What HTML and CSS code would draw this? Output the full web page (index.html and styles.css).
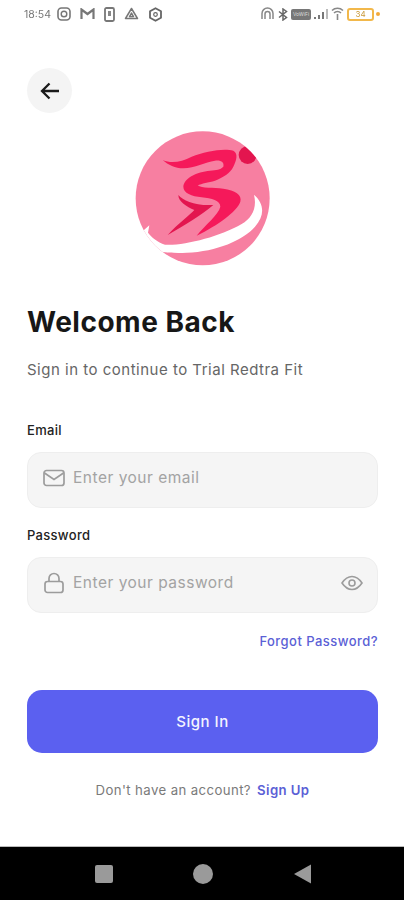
FILE: index.html
```html
<!DOCTYPE html>
<html lang="en">
<head>
  <meta charset="UTF-8">
  <meta name="viewport" content="width=device-width, initial-scale=1.0">
  <title>Sign In</title>
  <link rel="stylesheet" href="styles.css">
</head>
<body>
  <div class="status-bar">
    <div class="status-left">
      <span class="time">18:54</span>
      <svg class="st" width="14" height="14" viewBox="0 0 14 14"><rect x="1" y="1" width="12" height="12" rx="3.500" fill="none" stroke="#777" stroke-width="1.600"/><circle cx="7" cy="7" r="2.800" fill="none" stroke="#777" stroke-width="1.400"/></svg>
      <svg class="st" width="15" height="12" viewBox="0 0 15 12"><path d="M1.500 11V1.500L7.500 6l6-4.500V11" fill="none" stroke="#777" stroke-width="2.200"/></svg>
      <svg class="st" width="11" height="15" viewBox="0 0 11 15"><rect x="1" y="1" width="9" height="13" rx="1.500" fill="none" stroke="#777" stroke-width="1.800"/><rect x="4" y="4" width="3" height="5" fill="#888"/></svg>
      <svg class="st" width="15" height="14" viewBox="0 0 15 14"><path d="M7.500 1.500L13.500 11.500H1.500Z M7.500 6L5.500 9.500H9.500Z" fill="none" stroke="#777" stroke-width="1.500" stroke-linejoin="round"/></svg>
      <svg class="st" width="15" height="15" viewBox="0 0 15 15"><path d="M7.500 1.200L13 4.300V10.700L7.500 13.800L2 10.700V4.300Z" fill="none" stroke="#666" stroke-width="1.800" stroke-linejoin="round"/><circle cx="7.500" cy="7.500" r="1.800" fill="none" stroke="#666" stroke-width="1.200"/></svg>
    </div>
    <div class="status-right">
      <svg class="st" width="15" height="14" viewBox="0 0 15 14"><path d="M2 12V6.500a5.500 5.500 0 0 1 11 0V12M5 12V7a2.500 2.500 0 0 1 5 0v5" fill="none" stroke="#888" stroke-width="1.500"/></svg>
      <svg class="st" width="10" height="13" viewBox="0 0 10 13"><path d="M1 3.500L8.500 9.500L5 12V1L8.500 3.500L1 9.500" fill="none" stroke="#666" stroke-width="1.500"/></svg>
      <span class="volte">VoWiFi</span>
      <svg class="st" width="14" height="12" viewBox="0 0 14 12"><rect x="0" y="9" width="2" height="2" fill="#777"/><rect x="4" y="7" width="2" height="4" fill="#777"/><rect x="8" y="4" width="2" height="7" fill="#777"/><rect x="12" y="1" width="2" height="10" fill="#bbb"/></svg>
      <svg class="st" width="13" height="14" viewBox="0 0 13 14"><path d="M1 3.500a8 8 0 0 1 11 0M3 6a5 5 0 0 1 7 0M6.500 7v6" fill="none" stroke="#888" stroke-width="1.600"/></svg>
      <span class="battery">34</span>
      <span class="charge-dot"></span>
    </div>
  </div>

  <main class="screen">
    <button class="back-btn" aria-label="Back">
      <svg width="22" height="22" viewBox="0 0 22 22"><path d="M20 11H3.500M10.500 3.500L3 11l7.500 7.500" fill="none" stroke="#1a1a1a" stroke-width="2.300"/></svg>
    </button>

    <div class="logo-wrap">
      <svg class="logo" width="165" height="155" viewBox="0 0 495 465">
        <defs><clipPath id="disc"><circle cx="248" cy="235" r="201"/></clipPath></defs>
        <g clip-path="url(#disc)">
          <rect width="495" height="465" fill="#f77fa1"/>
          <circle cx="383" cy="105" r="27" fill="#e3154f"/>
          <path d="M402 224C432 250 436 285 405 320C370 360 290 395 200 398C170 400 145 398 125 396L30 380L40 325L72 330L88 316L84 338C95 352 112 366 135 374C190 378 300 350 365 312C395 295 412 265 402 224Z" fill="#fff"/>
        </g>
        <g transform="translate(105 60)">
          <path d="M23 60C50 72 80 65 110 50C150 34 205 24 235 32C250 40 245 60 235 80C225 100 205 112 180 122C160 128 140 130 128 136C140 146 175 142 205 146C240 150 262 165 256 185C245 215 190 255 125 287C150 255 190 225 196 200C196 182 170 175 140 172C110 168 85 160 85 140C87 115 125 95 165 92C185 90 195 90 205 80C208 68 200 60 180 62C150 66 120 84 85 85C60 85 40 75 23 60Z" fill="#f5195a"/>
          <path d="M70 165C85 182 120 198 175 195C140 225 90 255 38 285C70 250 105 225 118 210C95 200 70 185 70 165Z" fill="#e3154f"/>
        </g>
      </svg>
    </div>

    <h1 class="title">Welcome Back</h1>
    <p class="subtitle">Sign in to continue to Trial Redtra Fit</p>

    <form class="form">
      <label class="field-label">Email</label>
      <div class="field">
        <svg width="22" height="18" viewBox="0 0 22 18"><rect x="1" y="1.500" width="20" height="15" rx="2.500" fill="none" stroke="#9c9c9c" stroke-width="1.700"/><path d="M1.500 4L11 10.500L20.500 4" fill="none" stroke="#9c9c9c" stroke-width="1.700"/></svg>
        <span class="placeholder">Enter your email</span>
      </div>

      <label class="field-label pw-label">Password</label>
      <div class="field">
        <svg width="22" height="22" viewBox="0 0 22 22"><rect x="2" y="9.500" width="18" height="11" rx="2.500" fill="none" stroke="#9c9c9c" stroke-width="1.700"/><path d="M6 9.500V6.500a5 5 0 0 1 10 0v3" fill="none" stroke="#9c9c9c" stroke-width="1.700"/></svg>
        <span class="placeholder">Enter your password</span>
        <svg class="eye" width="22" height="16" viewBox="0 0 22 16"><path d="M1 8C4 3.500 7.500 1.500 11 1.500S18 3.500 21 8C18 12.500 14.500 14.500 11 14.500S4 12.500 1 8Z" fill="none" stroke="#9c9c9c" stroke-width="1.600"/><circle cx="11" cy="8" r="3" fill="none" stroke="#9c9c9c" stroke-width="1.600"/></svg>
      </div>

      <a class="forgot">Forgot Password?</a>
      <button class="sign-in" type="button">Sign In</button>
    </form>

    <p class="signup">Don't have an account? <a>Sign Up</a></p>
  </main>

  <nav class="nav-bar">
    <span class="nav-square"></span>
    <span class="nav-circle"></span>
    <svg width="18" height="20" viewBox="0 0 18 20"><path d="M1 10L18 0.500V19.500Z" fill="#9a9a9a"/></svg>
  </nav>
</body>
</html>
```

FILE: styles.css
```css
* {
  box-sizing: border-box;
}
body {
  margin: 0;
  height: 900px;
  display: flex;
  flex-direction: column;
  font-family: Inter, "Noto Sans", sans-serif;
  background: #fff;
  color: #1a1a1a;
  overflow: hidden;
}
.status-bar {
  height: 30px;
  padding: 0 24px 2px 24px;
  display: flex;
  justify-content: space-between;
  align-items: center;
  filter: blur(0.4px);
}
.status-left, .status-right {
  display: flex;
  align-items: center;
}
.status-left {
  gap: 9px;
}
.status-right {
  gap: 3px;
}
.st {
  display: block;
}
.time {
  width: 29px;
  font-size: 10.500px;
  color: #777;
  margin-right: -5px;
}
.volte {
  width: 20px;
  height: 11px;
  background: #777;
  color: #ddd;
  font-size: 5px;
  line-height: 11px;
  text-align: center;
  border-radius: 2px;
}
.battery {
  width: 27px;
  height: 13px;
  border: 2px solid #f2b84b;
  border-radius: 3px;
  font-size: 8px;
  line-height: 9px;
  text-align: center;
  color: #c99a3c;
}
.charge-dot {
  width: 4px;
  height: 4px;
  border-radius: 50%;
  background: #f2a93b;
  margin-left: -1px;
}
.screen {
  flex: 1;
  padding: 38px 26px 0 27px;
}
.back-btn {
  width: 45px;
  height: 45px;
  border: none;
  border-radius: 50%;
  background: #f4f4f4;
  padding: 0;
  display: flex;
  align-items: center;
  justify-content: center;
}
.logo-wrap {
  display: flex;
  justify-content: center;
  margin-top: 7px;
}
.logo {
  display: block;
}
.title {
  margin: 29px 0 0;
  font-size: 28px;
  line-height: 36px;
  font-weight: 700;
  letter-spacing: 0.500px;
  color: #171717;
}
.subtitle {
  margin: 20px 0 0;
  font-size: 15px;
  line-height: 20px;
  letter-spacing: 0.500px;
  color: #666;
}
.form {
  margin-top: 41px;
  display: flex;
  flex-direction: column;
}
.field-label {
  font-size: 13px;
  line-height: 18px;
  font-weight: 500;
  letter-spacing: 0.300px;
  color: #222;
}
.pw-label {
  margin-top: 18px;
}
.field {
  margin-top: 13px;
  height: 56px;
  padding: 0 14px 5px 15px;
  display: flex;
  align-items: center;
  gap: 8px;
  background: #f5f5f5;
  border: 1px solid #eee;
  border-radius: 14px;
}
.placeholder {
  font-size: 15.500px;
  letter-spacing: 0.500px;
  color: #a3a3a3;
}
.eye {
  margin-left: auto;
}
.forgot {
  margin-top: 19px;
  align-self: flex-end;
  font-size: 13px;
  line-height: 18px;
  font-weight: 500;
  letter-spacing: 0.450px;
  color: #5b5fd6;
}
.sign-in {
  margin-top: 40px;
  height: 63px;
  border: none;
  border-radius: 15px;
  background: #5b60f0;
  color: #f4f4ff;
  font-family: inherit;
  font-size: 15px;
  font-weight: 500;
  letter-spacing: 0.500px;
}
.signup {
  margin: 27px 0 0;
  text-align: center;
  font-size: 13.200px;
  line-height: 20px;
  letter-spacing: 0.400px;
  color: #7a7a7a;
}
.signup a {
  margin-left: 2px;
  color: #5b5fd6;
  font-weight: 600;
}
.nav-bar {
  height: 54px;
  background: #000;
  border-top: 1px solid #bbb;
  padding: 0 93px 0 95px;
  display: flex;
  align-items: center;
  justify-content: space-between;
}
.nav-square {
  width: 18px;
  height: 18px;
  border-radius: 2px;
  background: #9a9a9a;
}
.nav-circle {
  width: 20px;
  height: 20px;
  border-radius: 50%;
  background: #9a9a9a;
}
```
